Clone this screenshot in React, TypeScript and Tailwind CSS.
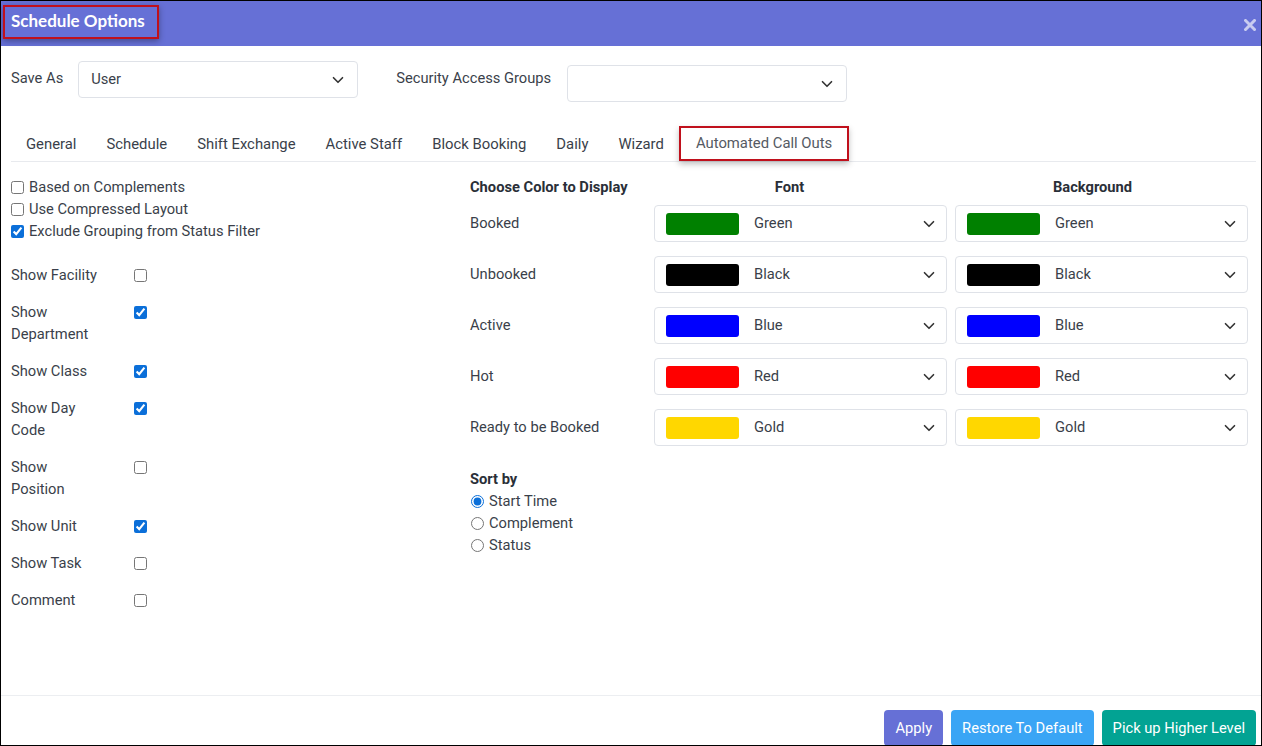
import { ChevronDown } from 'lucide-react';

const tabs = ['General', 'Schedule', 'Shift Exchange', 'Active Staff', 'Block Booking', 'Daily', 'Wizard', 'Automated Call Outs'];

const topChecks = [
  { label: 'Based on Complements', checked: false },
  { label: 'Use Compressed Layout', checked: false },
  { label: 'Exclude Grouping from Status Filter', checked: true },
];

const showRows = [
  { label: 'Show Facility', checked: false },
  { label: 'Show Department', checked: true },
  { label: 'Show Class', checked: true },
  { label: 'Show Day Code', checked: true },
  { label: 'Show Position', checked: false },
  { label: 'Show Unit', checked: true },
  { label: 'Show Task', checked: false },
  { label: 'Comment', checked: false },
];

const colorRows = [
  { label: 'Booked', name: 'Green', hex: '#008000' },
  { label: 'Unbooked', name: 'Black', hex: '#000000' },
  { label: 'Active', name: 'Blue', hex: '#0000ff' },
  { label: 'Hot', name: 'Red', hex: '#ff0000' },
  { label: 'Ready to be Booked', name: 'Gold', hex: '#ffd700' },
];

function ColorSelect({ name, hex }: { name: string; hex: string }) {
  return (
    <div className="w-[293px] h-[37px] border border-[#dfe2e8] rounded-[4px] bg-white flex items-center pl-[11px] pr-[8px]">
      <span className="w-[73px] h-[22px] rounded-[3px]" style={{ backgroundColor: hex }} />
      <span className="ml-[15px] flex-1 text-[#3a3f4a]">{name}</span>
      <ChevronDown className="w-[18px] h-[18px] text-[#333]" strokeWidth={2.2} />
    </div>
  );
}

export default function App() {
  return (
    <div className="w-[1262px] h-[746px] border border-black bg-white flex flex-col overflow-hidden text-[14.7px] text-[#3a3f4a] font-['Roboto',sans-serif]">
      {/* header */}
      <div className="h-[45px] bg-[#6670d6] flex items-start justify-between pl-[2px] pt-[4px] pr-[5px] shrink-0">
        <div className="h-[34px] border-2 border-[#c0101c] pl-[6px] pr-[12px] flex items-center shadow-[0_2px_6px_rgba(0,0,0,0.35)]">
          <span className="text-white text-[17px] font-bold font-['Lato',sans-serif] -mt-[3px]">Schedule Options</span>
        </div>
        <svg className="w-[12px] h-[12px] mt-[14px] text-[#c9ccf0]" viewBox="0 0 12 12">
          <path d="M1.5 1.5 L10.5 10.5 M10.5 1.5 L1.5 10.5" stroke="currentColor" strokeWidth="3" strokeLinecap="square" />
        </svg>
      </div>

      <div className="flex-1 pl-[10px] pr-[5px] pt-[15px]">
        {/* save as row */}
        <div className="flex items-start">
          <span className="leading-[22px] mt-[6px]">Save As</span>
          <div className="ml-[15px] w-[280px] h-[37px] border border-[#dfe2e8] rounded-[4px] flex items-center pl-[12px] pr-[10px]">
            <span className="flex-1">User</span>
            <ChevronDown className="w-[18px] h-[18px] text-[#333]" strokeWidth={2.2} />
          </div>
          <span className="ml-[38px] leading-[22px] mt-[6px]">Security Access Groups</span>
          <div className="ml-[16px] mt-[4px] w-[280px] h-[37px] border border-[#dfe2e8] rounded-[4px] flex items-center justify-end pr-[10px]">
            <ChevronDown className="w-[18px] h-[18px] text-[#333]" strokeWidth={2.2} />
          </div>
        </div>

        {/* tabs */}
        <div className="mt-[24px] flex items-stretch border-b border-[#e8eaee] h-[36px] text-[14.85px]">
          {tabs.map((t, i) =>
            i === tabs.length - 1 ? (
              <div key={t} className="px-[15px] border-2 border-[#c0101c] flex items-center text-[#555a63] shadow-[0_3px_6px_rgba(0,0,0,0.25)]">
                {t}
              </div>
            ) : (
              <div key={t} className="px-[15px] flex items-center pt-[2px]">
                {t}
              </div>
            )
          )}
        </div>

        {/* body */}
        <div className="flex mt-[14px]">
          <div className="w-[459px] shrink-0">
            <div className="flex flex-col">
              {topChecks.map((c) => (
                <label key={c.label} className="flex items-center h-[22px] leading-[22px]">
                  <input type="checkbox" defaultChecked={c.checked} className="m-0 w-[13px] h-[13px] accent-[#0b6fd9]" />
                  <span className="ml-[5px]">{c.label}</span>
                </label>
              ))}
            </div>
            <div className="mt-[22px] flex flex-col gap-[15px]">
              {showRows.map((r) => (
                <div key={r.label} className="flex items-start">
                  <span className="w-[90px] leading-[22px]">{r.label}</span>
                  <input type="checkbox" defaultChecked={r.checked} className="ml-[33px] mt-[5px] w-[13px] h-[13px] accent-[#0b6fd9]" />
                </div>
              ))}
            </div>
          </div>

          <div className="flex-1">
            <div className="flex h-[22px] items-center font-bold text-[#2a2f38]">
              <span className="w-[184px]">Choose Color to Display</span>
              <span className="w-[293px] pr-[22px] text-center">Font</span>
              <span className="w-[293px] ml-[8px] pr-[18px] text-center">Background</span>
            </div>
            <div className="mt-[7px] flex flex-col gap-[14px]">
              {colorRows.map((r) => (
                <div key={r.label} className="flex items-center">
                  <span className="w-[184px]">{r.label}</span>
                  <ColorSelect name={r.name} hex={r.hex} />
                  <div className="ml-[8px]">
                    <ColorSelect name={r.name} hex={r.hex} />
                  </div>
                </div>
              ))}
            </div>
            <div className="mt-[22px] font-bold leading-[22px] text-[#2a2f38]">Sort by</div>
            {['Start Time', 'Complement', 'Status'].map((s, i) => (
              <label key={s} className="flex items-center h-[22px]">
                <input type="radio" name="sort" defaultChecked={i === 0} className="m-0 ml-[1px] w-[13px] h-[13px] accent-[#0b6fd9]" />
                <span className="ml-[5px]">{s}</span>
              </label>
            ))}
          </div>
        </div>
      </div>

      {/* footer */}
      <div className="h-[50px] shrink-0 border-t border-[#eceef1] flex justify-end items-start pt-[14px] pr-[5px] gap-[8px]">
        <button className="h-[36px] px-[11px] rounded-[4px] bg-[#6670d6] text-white">Apply</button>
        <button className="h-[36px] px-[11px] rounded-[4px] bg-[#3aa5f5] text-white">Restore To Default</button>
        <button className="h-[36px] px-[11px] rounded-[4px] bg-[#02a393] text-white">Pick up Higher Level</button>
      </div>
    </div>
  );
}
